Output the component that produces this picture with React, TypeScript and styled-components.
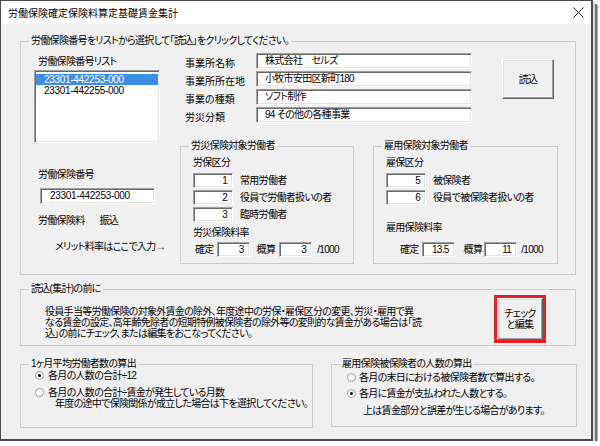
import React from "react";
import styled, { createGlobalStyle } from "styled-components";

const GlobalStyle = createGlobalStyle`
  html, body {
    margin: 0;
    padding: 0;
    background: #ffffff;
  }
  body {
    font-family: "Liberation Sans", "Noto Sans CJK JP", sans-serif;
    font-size: 10px;
    color: #000;
    font-feature-settings: "palt" 1;
  }
  *, *::before, *::after {
    box-sizing: border-box;
  }
`;

const Window = styled.div`
  width: 593px;
  height: 441px;
  display: flex;
  flex-direction: column;
  background: #f0f0f0;
  border: 1px solid #4a4a4a;
  border-right-width: 2px;
  border-bottom-width: 2px;
  box-shadow: 2px 2px 0 #dadada, 4px 4px 0 #6f6f6f, 5px 5px 1px #b4b4b4;
  letter-spacing: -0.7px;
`;

const TitleBar = styled.div`
  height: 23px;
  flex: none;
  display: flex;
  align-items: center;
  justify-content: space-between;
  padding: 0 7px 0 7px;
  background: #ffffff;
  font-size: 10px;
  letter-spacing: 0;
`;

const Body = styled.div`
  flex: 1;
  padding: 11px 0 0 19px;
`;

const Group = styled.fieldset<{ $w: number; $h: number; $mt?: number }>`
  margin: ${(p) => p.$mt ?? 0}px 0 0 0;
  padding: 0;
  min-width: 0;
  flex: none;
  width: ${(p) => p.$w}px;
  height: ${(p) => p.$h}px;
  border: 1px solid #cacaca;
`;

const Legend = styled.legend`
  margin-left: 8px;
  padding: 0 2px;
  font-size: 10px;
  line-height: 12px;
  white-space: nowrap;
`;

const MainRow = styled.div`
  display: flex;
  padding-left: 13px;
`;

const LeftCol = styled.div`
  width: 126px;
  flex: none;
  display: flex;
  flex-direction: column;
`;

const Caption = styled.div<{ $mt?: number; $pl?: number }>`
  margin-top: ${(p) => p.$mt ?? 0}px;
  padding-left: ${(p) => p.$pl ?? 0}px;
  line-height: 12px;
  white-space: nowrap;
`;

const ListBox = styled.div`
  margin-top: 2px;
  height: 73px;
  padding: 3px 1px;
  background: #ffffff;
  border: 1px solid;
  border-color: #a0a0a0 #ffffff #ffffff #a0a0a0;
  box-shadow: inset 1px 1px 0 #696969, inset -1px -1px 0 #e3e3e3;
`;

const ListItem = styled.div<{ $selected?: boolean }>`
  height: 11px;
  line-height: 11px;
  padding-left: 8px;
  letter-spacing: -0.3px;
  background: ${(p) => (p.$selected ? "#3b8fe6" : "transparent")};
  color: ${(p) => (p.$selected ? "#ffffff" : "#000000")};
`;

const Field = styled.div<{ $w: number; $h?: number; $right?: boolean; $ml?: number }>`
  flex: none;
  width: ${(p) => p.$w}px;
  height: ${(p) => p.$h ?? 16}px;
  margin-left: ${(p) => p.$ml ?? 0}px;
  background: #ffffff;
  border: 1px solid;
  border-color: #a0a0a0 #ffffff #ffffff #a0a0a0;
  box-shadow: inset 1px 1px 0 #696969, inset -1px -1px 0 #e3e3e3;
  line-height: ${(p) => (p.$h ?? 16) - 2}px;
  padding: ${(p) => (p.$right ? "0 5px 0 0" : "0 0 0 8px")};
  text-align: ${(p) => (p.$right ? "right" : "left")};
  white-space: nowrap;
  overflow: hidden;
`;

const NumberField = styled(Field)`
  margin-top: 7px;
  margin-left: 6px;
  padding-left: 9px;
  letter-spacing: -0.3px;
`;

const PayRow = styled.div`
  margin-top: 11px;
  padding-left: 4px;
  display: flex;
  gap: 15px;
  line-height: 12px;
  white-space: nowrap;
`;

const RightArea = styled.div`
  margin-left: 20px;
  width: 378px;
  flex: none;
`;

const InfoRow = styled.div`
  display: flex;
  align-items: flex-start;
  padding: 6px 0 0 5px;
`;

const InfoGrid = styled.div`
  display: grid;
  grid-template-columns: 71px 216px;
  grid-auto-rows: 16px;
  row-gap: 2px;
`;

const InfoLabel = styled.div`
  line-height: 12px;
  align-self: end;
  margin-bottom: -1px;
  white-space: nowrap;
  letter-spacing: 0;
`;

const PushButton = styled.button<{ $w: number; $h: number }>`
  width: ${(p) => p.$w}px;
  height: ${(p) => p.$h}px;
  flex: none;
  padding: 0;
  font: inherit;
  font-size: 10px;
  line-height: 11px;
  letter-spacing: -0.7px;
  color: #000;
  background: #f0f0f0;
  border: 1px solid;
  border-color: #ffffff #646464 #646464 #ffffff;
  box-shadow: inset -1px -1px 0 #a0a0a0, inset 1px 1px 0 #e3e3e3;
`;

const LoadButton = styled(PushButton)`
  margin: 6px 0 0 30px;
`;

const GroupRow = styled.div`
  margin-top: 17px;
  display: flex;
  gap: 19px;
`;

const GroupBody = styled.div<{ $pl?: number }>`
  padding-left: ${(p) => p.$pl ?? 0}px;
  display: flex;
  flex-direction: column;
`;

const CodeList = styled.div`
  margin-top: 4px;
  display: flex;
  flex-direction: column;
  gap: 2px;
`;

const CodeRow = styled.div`
  height: 15px;
  display: flex;
  align-items: center;
  gap: 7px;
  line-height: 12px;
  white-space: nowrap;
`;

const RateRow = styled.div<{ $mt: number; $pl: number }>`
  margin-top: ${(p) => p.$mt}px;
  padding-left: ${(p) => p.$pl}px;
  height: 15px;
  display: flex;
  align-items: center;
  line-height: 12px;
  white-space: nowrap;
`;

const RateLabel = styled.span<{ $ml?: number }>`
  margin-left: ${(p) => p.$ml ?? 0}px;
`;

const NoticeRow = styled.div`
  display: flex;
  justify-content: space-between;
  align-items: flex-start;
  padding: 0 29px 0 24px;
`;

const Notice = styled.p`
  margin: 11px 0 0 0;
  line-height: 11px;
  white-space: nowrap;
`;

const Highlight = styled.div`
  width: 52px;
  height: 48px;
  flex: none;
  display: flex;
  border: 3px solid #ec1c24;
`;

const BottomRow = styled.div`
  margin-top: 12px;
  display: flex;
  gap: 18px;
`;

const RadioRow = styled.div<{ $mt: number; $pl: number; $gap: number }>`
  margin-top: ${(p) => p.$mt}px;
  padding-left: ${(p) => p.$pl}px;
  height: 11px;
  line-height: 11px;
  display: flex;
  align-items: center;
  gap: ${(p) => p.$gap}px;
  white-space: nowrap;
`;

const Radio = styled.span<{ $checked?: boolean }>`
  width: 9px;
  height: 9px;
  flex: none;
  border-radius: 50%;
  border: 1px solid #9a9a9a;
  background: #ffffff;
  display: flex;
  align-items: center;
  justify-content: center;
  &::after {
    content: "";
    width: 3px;
    height: 3px;
    border-radius: 50%;
    background: ${(p) => (p.$checked ? "#000000" : "transparent")};
  }
`;

const Note = styled.div<{ $mt: number; $pl: number }>`
  margin-top: ${(p) => p.$mt}px;
  padding-left: ${(p) => p.$pl}px;
  line-height: 11px;
  white-space: nowrap;
`;

const CloseIcon = () => (
  <svg width="11" height="11" viewBox="0 0 11 11">
    <path d="M0.5 0.5 L10.5 10.5 M10.5 0.5 L0.5 10.5" stroke="#1e1e1e" strokeWidth="1" />
  </svg>
);

const infoRows = [
  ["事業所名称", "株式会社　セルズ"],
  ["事業所所在地", "小牧市安田区新町180"],
  ["事業の種類", "ソフト制作"],
  ["労災分類", "94 その他の各種事業"],
];

export default function App() {
  return (
    <>
      <GlobalStyle />
      <Window>
        <TitleBar>
          <span>労働保険確定保険料算定基礎賃金集計</span>
          <CloseIcon />
        </TitleBar>
        <Body>
          <Group $w={556} $h={240}>
            <Legend>労働保険番号をリストから選択して「読込」をクリックしてください。</Legend>
            <MainRow>
              <LeftCol>
                <Caption $mt={9} $pl={4}>
                  労働保険番号リスト
                </Caption>
                <ListBox>
                  <ListItem $selected>23301-442253-000</ListItem>
                  <ListItem>23301-442255-000</ListItem>
                </ListBox>
                <Caption $mt={26} $pl={4}>
                  労働保険番号
                </Caption>
                <NumberField $w={115}>23301-442253-000</NumberField>
                <PayRow>
                  <span>労働保険料</span>
                  <span>振込</span>
                </PayRow>
                <Caption $mt={14} $pl={21}>
                  メリット料率はここで入力→
                </Caption>
              </LeftCol>
              <RightArea>
                <InfoRow>
                  <InfoGrid>
                    {infoRows.map(([label, value]) => (
                      <React.Fragment key={label}>
                        <InfoLabel>{label}</InfoLabel>
                        <Field $w={216}>{value}</Field>
                      </React.Fragment>
                    ))}
                  </InfoGrid>
                  <LoadButton $w={52} $h={40}>
                    読込
                  </LoadButton>
                </InfoRow>
                <GroupRow>
                  <Group $w={174} $h={124}>
                    <Legend>労災保険対象労働者</Legend>
                    <GroupBody $pl={12}>
                      <Caption $mt={5}>労保区分</Caption>
                      <CodeList>
                        <CodeRow>
                          <Field $w={40} $h={15} $right>1</Field>
                          <span>常用労働者</span>
                        </CodeRow>
                        <CodeRow>
                          <Field $w={40} $h={15} $right>2</Field>
                          <span>役員で労働者扱いの者</span>
                        </CodeRow>
                        <CodeRow>
                          <Field $w={40} $h={15} $right>3</Field>
                          <span>臨時労働者</span>
                        </CodeRow>
                      </CodeList>
                      <Caption $mt={5}>労災保険料率</Caption>
                      <RateRow $mt={3} $pl={2}>
                        <RateLabel>確定</RateLabel>
                        <Field $w={33} $h={15} $right $ml={3}>3</Field>
                        <RateLabel $ml={7}>概算</RateLabel>
                        <Field $w={33} $h={15} $right $ml={4}>3</Field>
                        <RateLabel $ml={5}>/1000</RateLabel>
                      </RateRow>
                    </GroupBody>
                  </Group>
                  <Group $w={185} $h={124}>
                    <Legend>雇用保険対象労働者</Legend>
                    <GroupBody $pl={12}>
                      <Caption $mt={5}>雇保区分</Caption>
                      <CodeList>
                        <CodeRow>
                          <Field $w={40} $h={15} $right>5</Field>
                          <span>被保険者</span>
                        </CodeRow>
                        <CodeRow>
                          <Field $w={40} $h={15} $right>6</Field>
                          <span>役員で被保険者扱いの者</span>
                        </CodeRow>
                      </CodeList>
                      <Caption $mt={17}>雇用保険料率</Caption>
                      <RateRow $mt={8} $pl={14}>
                        <RateLabel>確定</RateLabel>
                        <Field $w={33} $h={15} $right $ml={3}>13.5</Field>
                        <RateLabel $ml={9}>概算</RateLabel>
                        <Field $w={33} $h={15} $right $ml={2}>11</Field>
                        <RateLabel $ml={4}>/1000</RateLabel>
                      </RateRow>
                    </GroupBody>
                  </Group>
                </GroupRow>
              </RightArea>
            </MainRow>
          </Group>

          <Group $w={556} $h={63} $mt={8}>
            <Legend>読込(集計)の前に</Legend>
            <NoticeRow>
              <Notice>
                役員手当等労働保険の対象外賃金の除外、年度途中の労保・雇保区分の変更、労災・雇用で異
                <br />
                なる賃金の設定、高年齢免除者の短期特例被保険者の除外等の変則的な賃金がある場合は「読
                <br />
                込」の前にチェック、または編集をおこなってください。
              </Notice>
              <Highlight>
                <PushButton $w={46} $h={42}>
                  チェック
                  <br />
                  と編集
                </PushButton>
              </Highlight>
            </NoticeRow>
          </Group>

          <BottomRow>
            <Group $w={293} $h={70}>
              <Legend>1ヶ月平均労働者数の算出</Legend>
              <GroupBody>
                <RadioRow $mt={0} $pl={14} $gap={4}>
                  <Radio $checked />
                  <span>各月の人数の合計÷12</span>
                </RadioRow>
                <RadioRow $mt={6} $pl={14} $gap={4}>
                  <Radio />
                  <span>各月の人数の合計÷賃金が発生している月数</span>
                </RadioRow>
                <Note $mt={0} $pl={34}>
                  年度の途中で保険関係が成立した場合は下を選択してください。
                </Note>
              </GroupBody>
            </Group>
            <Group $w={246} $h={69}>
              <Legend>雇用保険被保険者の人数の算出</Legend>
              <GroupBody>
                <RadioRow $mt={2} $pl={15} $gap={3}>
                  <Radio />
                  <span>各月の末日における被保険者数で算出する。</span>
                </RadioRow>
                <RadioRow $mt={5} $pl={15} $gap={3}>
                  <Radio $checked />
                  <span>各月に賃金が支払われた人数とする。</span>
                </RadioRow>
                <Note $mt={6} $pl={31}>
                  上は賃金部分と誤差が生じる場合があります。
                </Note>
              </GroupBody>
            </Group>
          </BottomRow>
        </Body>
      </Window>
    </>
  );
}
